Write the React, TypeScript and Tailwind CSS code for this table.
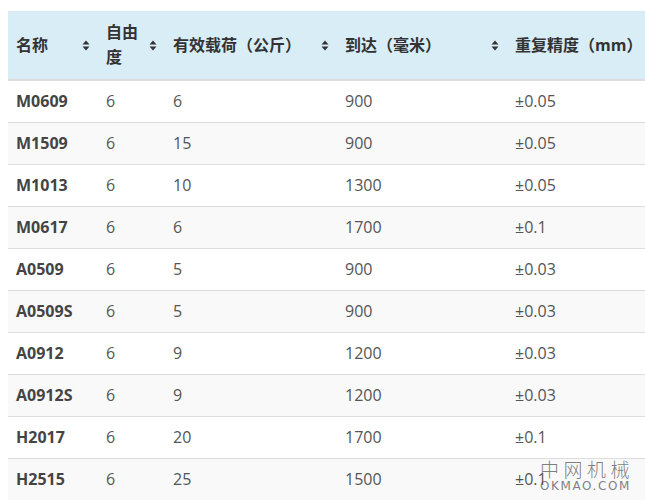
const rows = [
  ["M0609", "6", "6", "900", "±0.05"],
  ["M1509", "6", "15", "900", "±0.05"],
  ["M1013", "6", "10", "1300", "±0.05"],
  ["M0617", "6", "6", "1700", "±0.1"],
  ["A0509", "6", "5", "900", "±0.03"],
  ["A0509S", "6", "5", "900", "±0.03"],
  ["A0912", "6", "9", "1200", "±0.03"],
  ["A0912S", "6", "9", "1200", "±0.03"],
  ["H2017", "6", "20", "1700", "±0.1"],
  ["H2515", "6", "25", "1500", "±0.1"],
];

const headers = ["名称", "自由度", "有效载荷（公斤）", "到达（毫米）", "重复精度（mm）"];

function SortIcon() {
  return (
    <svg width="8" height="11" viewBox="0 0 8 11" className="shrink-0">
      <path d="M4 0.5 L7.5 4.5 L0.5 4.5 Z" fill="#333" />
      <path d="M4 10.5 L7.5 6.5 L0.5 6.5 Z" fill="#333" />
    </svg>
  );
}

export default function App() {
  return (
    <div
      className="relative h-[501px] w-[645px] overflow-hidden bg-white pt-[11px] pl-2"
      style={{ fontFamily: '"Open Sans", "Noto Sans CJK SC", sans-serif' }}
    >
      <table className="w-[700px] table-fixed border-collapse text-[16px]">
        <colgroup>
          <col className="w-[90px]" />
          <col className="w-[67px]" />
          <col className="w-[172px]" />
          <col className="w-[170px]" />
          <col />
        </colgroup>
        <thead>
          <tr className="h-[69px] border-b-2 border-[#dddddd] bg-[#d9edf7]">
            {headers.map((h, i) => (
              <th key={h} className="px-2 text-left font-bold text-[#333]">
                <div className="flex items-center justify-between gap-1 leading-[25px]">
                  <span className={i === 1 ? "w-[34px]" : ""}>{h}</span>
                  {i < 4 && <SortIcon />}
                </div>
              </th>
            ))}
          </tr>
        </thead>
        <tbody>
          {rows.map((r, ri) => (
            <tr
              key={r[0]}
              className={`h-[42px] border-t border-[#dddddd] ${ri % 2 === 1 ? "bg-[#f9f9f9]" : "bg-white"}`}
            >
              {r.map((c, ci) => (
                <td
                  key={ci}
                  className={`px-2 align-middle ${ci === 0 ? "font-bold text-[#444]" : "text-[#555]"}`}
                >
                  {c}
                </td>
              ))}
            </tr>
          ))}
        </tbody>
      </table>
      <div className="absolute top-[457px] left-[540px] flex w-[92px] flex-col text-[#555]/75">
        <div
          className="text-[19px] leading-[23px] tracking-[4.5px] whitespace-nowrap font-light"
          style={{ fontFamily: '"Noto Sans CJK SC", sans-serif' }}
        >
          中网机械
        </div>
        <div
          className="text-[12px] leading-[12px] tracking-[1.6px] whitespace-nowrap"
          style={{ fontFamily: '"DejaVu Sans", sans-serif' }}
        >
          OKMAO.COM
        </div>
      </div>
    </div>
  );
}
